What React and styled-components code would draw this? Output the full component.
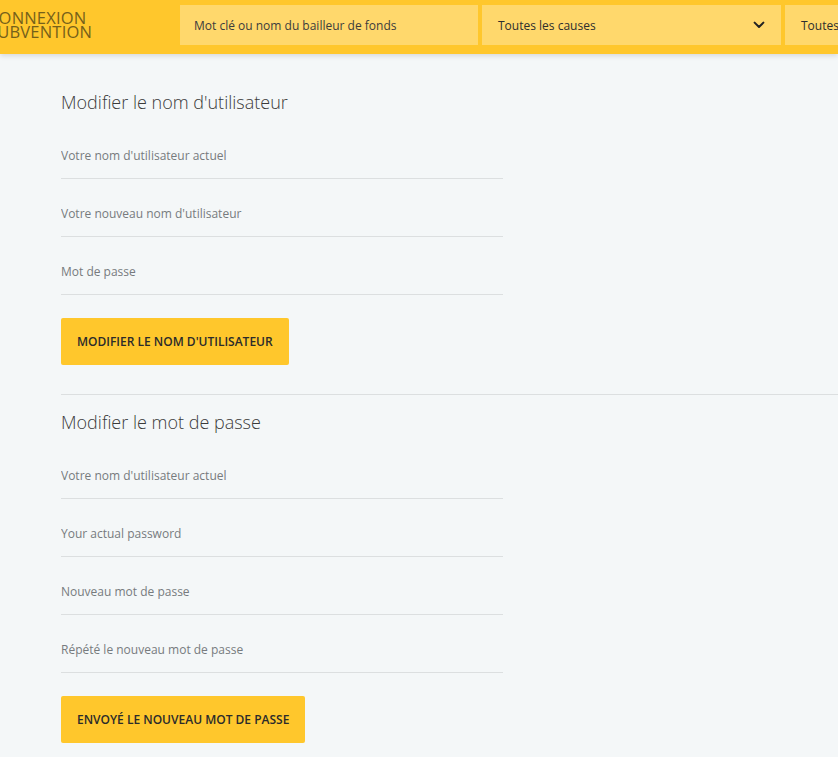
import React from "react";
import styled, { createGlobalStyle } from "styled-components";

const GlobalStyle = createGlobalStyle`
  html, body {
    margin: 0;
    padding: 0;
    background: #f4f7f8;
    font-family: "Open Sans", "Liberation Sans", sans-serif;
    overflow-x: hidden;
  }
`;

const Chevron = () => (
  <svg width="14" height="14" viewBox="0 0 24 24" fill="none">
    <path
      d="M4.5 8l7.5 7.5 7.5-7.5"
      stroke="#222"
      strokeWidth="3.4"
      strokeLinecap="round"
      strokeLinejoin="round"
    />
  </svg>
);

const usernameFields = [
  "Votre nom d'utilisateur actuel",
  "Votre nouveau nom d'utilisateur",
  "Mot de passe",
];

const passwordFields = [
  "Votre nom d'utilisateur actuel",
  "Your actual password",
  "Nouveau mot de passe",
  "Répété le nouveau mot de passe",
];

const App = () => {
  return (
    <>
      <GlobalStyle />
      <Header>
        <Logo>
          <span>CONNEXION</span>
          <span>SUBVENTION</span>
        </Logo>
        <Search>
          <SearchBox>Mot clé ou nom du bailleur de fonds</SearchBox>
          <SelectBox>
            Toutes les causes
            <Chevron />
          </SelectBox>
          <SelectBox>
            Toutes les régions
            <Chevron />
          </SelectBox>
        </Search>
      </Header>

      <Main>
        <Section>
          <Title>Modifier le nom d'utilisateur</Title>
          {usernameFields.map((label) => (
            <Field key={label} placeholder={label} />
          ))}
          <Button>Modifier le nom d'utilisateur</Button>
        </Section>
        <Divider />
        <Section>
          <Title>Modifier le mot de passe</Title>
          {passwordFields.map((label, i) => (
            <Field key={i} placeholder={label} />
          ))}
          <Button>Envoyé le nouveau mot de passe</Button>
        </Section>
      </Main>
    </>
  );
};

export default App;

const Header = styled.header`
  height: 54px;
  box-sizing: border-box;
  padding-top: 5px;
  background: #ffc72c;
  box-shadow: 0 2px 5px rgba(0, 0, 0, 0.12);
  display: flex;
  align-items: flex-start;
  white-space: nowrap;
  overflow: hidden;
`;

const Logo = styled.div`
  margin: 6px 0 0 -12px;
  width: 192px;
  flex-shrink: 0;
  display: flex;
  flex-direction: column;
  font-size: 16.5px;
  font-weight: 400;
  line-height: 14px;
  letter-spacing: 0.2px;
  color: #75601a;
`;

const Search = styled.div`
  display: flex;
  gap: 4px;
  flex-shrink: 0;
`;

const SearchBox = styled.div`
  width: 284px;
  height: 40px;
  padding: 0 0 0 14px;
  background: #ffd86c;
  display: flex;
  align-items: center;
  font-size: 12px;
  color: #3c3c3c;
`;

const SelectBox = styled(SearchBox)`
  width: 268px;
  padding: 0 15px 0 16px;
  justify-content: space-between;
  color: #2e2e2e;
`;

const Main = styled.main`
  padding: 36px 0 20px 61px;
`;

const Section = styled.section`
  width: 442px;
  display: flex;
  flex-direction: column;
`;

const Title = styled.h2`
  margin: 0 0 7px;
  font-size: 18px;
  font-weight: 300;
  color: #3a3a3a;
  line-height: 24px;
`;

const Field = styled.input`
  box-sizing: border-box;
  height: 58px;
  padding: 23px 0 12px;
  border: none;
  border-bottom: 1px solid #dcdfe0;
  background: transparent;
  font-family: inherit;
  font-size: 12px;
  color: #555;
  outline: none;

  &::placeholder {
    color: #777b7e;
  }
`;

const Button = styled.button`
  align-self: flex-start;
  margin-top: 23px;
  height: 47px;
  padding: 0 16px;
  border: none;
  border-radius: 2px;
  background: #ffc72c;
  font-family: inherit;
  font-size: 12px;
  font-weight: 600;
  text-transform: uppercase;
  color: #2b2b2b;
  cursor: pointer;
`;

const Divider = styled.hr`
  margin: 29px 0 15px;
  border: none;
  border-top: 1px solid #dcdfe0;
`;
